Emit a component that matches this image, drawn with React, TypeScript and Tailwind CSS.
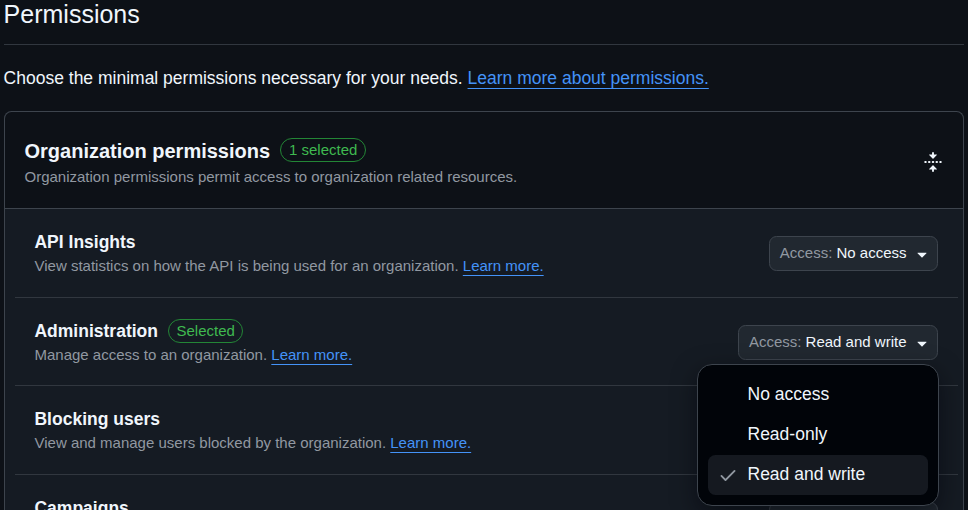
import type { ReactNode } from "react";

function Icon({ path, className }: { path: string; className: string }) {
  return (
    <svg viewBox="0 0 16 16" fill="currentColor" aria-hidden="true" className={className}>
      <path d={path} />
    </svg>
  );
}

const FOLD =
  "M10.896 2H8.75V.75a.75.75 0 0 0-1.5 0V2H5.104a.25.25 0 0 0-.177.427l2.896 2.896a.25.25 0 0 0 .354 0l2.896-2.896A.25.25 0 0 0 10.896 2ZM8.75 15.25a.75.75 0 0 1-1.5 0V14H5.104a.25.25 0 0 1-.177-.427l2.896-2.896a.25.25 0 0 1 .354 0l2.896 2.896a.25.25 0 0 1-.177.427H8.75v1.25Zm-6.5-6.5a.75.75 0 0 0 0-1.5h-.5a.75.75 0 0 0 0 1.5h.5ZM6 8a.75.75 0 0 1-.75.75h-.5a.75.75 0 0 1 0-1.5h.5A.75.75 0 0 1 6 8Zm2.25.75a.75.75 0 0 0 0-1.5h-.5a.75.75 0 0 0 0 1.5h.5ZM12 8a.75.75 0 0 1-.75.75h-.5a.75.75 0 0 1 0-1.5h.5A.75.75 0 0 1 12 8Zm2.25.75a.75.75 0 0 0 0-1.5h-.5a.75.75 0 0 0 0 1.5h.5Z";
const TRIANGLE_DOWN =
  "m4.427 7.427 3.396 3.396a.25.25 0 0 0 .354 0l3.396-3.396A.25.25 0 0 0 11.396 7H4.604a.25.25 0 0 0-.177.427Z";
const CHECK =
  "M13.78 4.22a.75.75 0 0 1 0 1.06l-7.25 7.25a.75.75 0 0 1-1.06 0L2.22 9.28a.751.751 0 0 1 .018-1.042.751.751 0 0 1 1.042-.018L6 10.94l6.72-6.72a.75.75 0 0 1 1.06 0Z";

function Link({ children }: { children: ReactNode }) {
  return (
    <a href="#" className="text-[#4493f8] underline decoration-1 underline-offset-[4px] [text-decoration-skip-ink:none]">
      {children}
    </a>
  );
}

function Badge({ children }: { children: ReactNode }) {
  return (
    <span className="flex h-6 items-center rounded-full border border-[#238636] px-[7.5px] text-[15px] leading-[22px] text-[#3fb950]">
      {children}
    </span>
  );
}

function AccessButton({ value }: { value: string }) {
  return (
    <button className="mt-px flex h-[35px] items-center rounded-[7.5px] border border-[#3d444d] bg-[#212830] pr-[5px] pl-[9.75px] text-[15px] text-[#f0f6fc]">
      <span className="whitespace-pre text-[#9198a1]">Access: </span>
      <span>{value}</span>
      <Icon path={TRIANGLE_DOWN} className="mt-px ml-[5.5px] size-5" />
    </button>
  );
}

type Permission = { name: string; description: string; access: string; selected?: boolean };

const permissions: Permission[] = [
  { name: "API Insights", description: "View statistics on how the API is being used for an organization.", access: "No access" },
  { name: "Administration", description: "Manage access to an organization.", access: "Read and write", selected: true },
  { name: "Blocking users", description: "View and manage users blocked by the organization.", access: "No access" },
  { name: "Campaigns", description: "Manage campaigns.", access: "No access" },
];

function PermissionRow({ name, description, access, selected }: Permission) {
  return (
    <li className="relative flex h-[88.6px] items-center justify-between border-b border-[#31373f] pt-[0.4px] pr-5 pl-[19.5px]">
      <div>
        <div className="flex h-[26px] items-center gap-[10px]">
          <strong className="text-[17.5px] leading-[26px] font-bold">{name}</strong>
          {selected && <Badge>Selected</Badge>}
        </div>
        <p className="text-[15px] leading-[22px] text-[#9198a1]">
          {description} <Link>Learn more.</Link>
        </p>
      </div>
      <AccessButton value={access} />
      {selected && <AccessMenu value={access} />}
    </li>
  );
}

function AccessMenu({ value }: { value: string }) {
  return (
    <div className="absolute top-[66px] right-[19px] z-10 w-[242px] rounded-[15px] border border-[#3d444d] bg-[#010409] p-[10px] shadow-[0_8px_24px_rgba(1,4,9,0.5)]">
      {["No access", "Read-only", "Read and write"].map((option) => (
        <div
          key={option}
          className={
            option === value
              ? "flex h-10 items-center rounded-[7.5px] bg-[#151920] pl-[10px] text-[17.5px]"
              : "flex h-10 items-center rounded-[7.5px] pl-[10px] text-[17.5px]"
          }
        >
          <span className="mr-[9.5px] flex size-5 items-center text-[#9198a1]">
            {option === value && <Icon path={CHECK} className="size-5" />}
          </span>
          {option}
        </div>
      ))}
    </div>
  );
}

export default function App() {
  return (
    <main className="h-[510px] w-[968px] overflow-hidden bg-[#0d1117] pr-1 pl-[3.6px] font-['Liberation_Sans',Arial,sans-serif] text-[#f0f6fc]">
      <h2 className="h-[45px] border-b border-[#31373f] text-[25px] leading-[28px]">Permissions</h2>
      <p className="mt-5 h-[46px] text-[17.5px] leading-[26px]">
        Choose the minimal permissions necessary for your needs. <Link>Learn more about permissions.</Link>
      </p>
      <section className="ml-[0.4px] rounded-t-[7.5px] border border-b-0 border-[#3d444d]">
        <header className="flex h-[97px] items-center justify-between border-b border-[#3d444d] pt-1 pr-5 pl-[19.5px]">
          <div>
            <div className="flex h-[29px] items-start gap-[10.4px]">
              <h3 className="text-[20px] leading-[28px] font-bold">Organization permissions</h3>
              <div className="pt-[1.5px]">
                <Badge>1 selected</Badge>
              </div>
            </div>
            <p className="text-[15px] leading-[22px] text-[#9198a1]">
              Organization permissions permit access to organization related resources.
            </p>
          </div>
          <Icon path={FOLD} className="size-5" />
        </header>
        <ul className="bg-[#151b23] pr-[5px] pl-[10px]">
          {permissions.map((permission) => (
            <PermissionRow key={permission.name} {...permission} />
          ))}
        </ul>
      </section>
    </main>
  );
}
